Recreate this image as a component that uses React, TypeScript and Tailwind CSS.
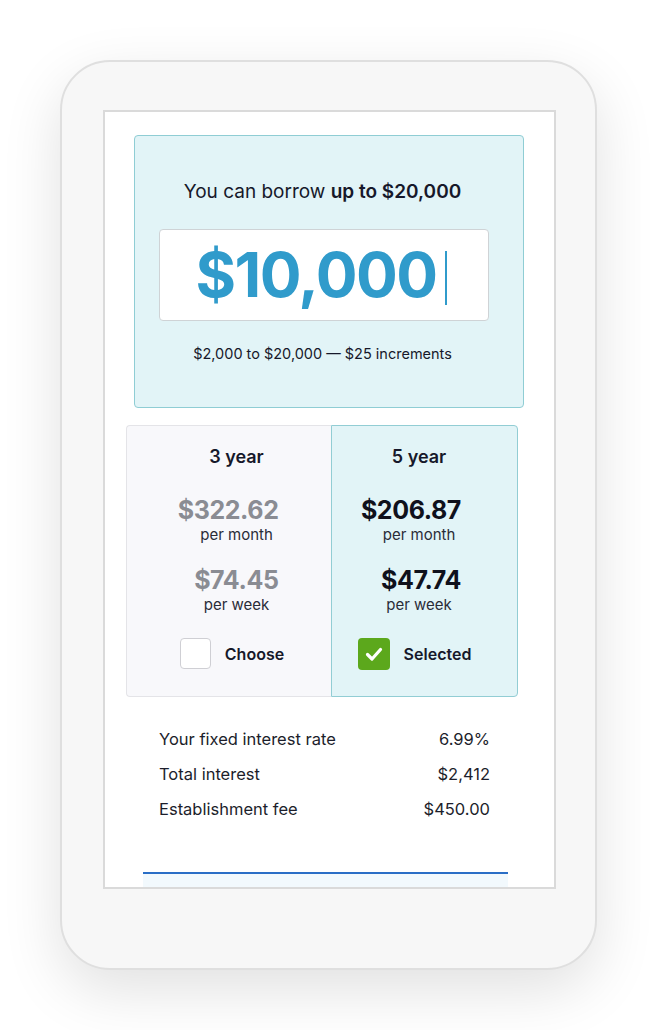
import React from 'react';

const font = { fontFamily: 'Inter, "Open Sans", sans-serif' };

const Option = ({
  title,
  month,
  week,
  selected,
}: {
  title: string;
  month: string;
  week: string;
  selected: boolean;
}) => (
  <div
    className={
      selected
        ? 'w-[187px] flex flex-col items-center bg-[#e2f4f7] border border-[#92cdd4] rounded-r-[4px] pr-[11px] pt-[18px]'
        : 'w-[205px] flex flex-col items-center bg-[#f8f8fb] border border-r-0 border-[#e4e4e8] rounded-l-[4px] pl-[15px] pt-[18px]'
    }
  >
    <div className="text-[18px] font-semibold text-[#16182a] leading-[26px]">{title}</div>
    <div className="w-[120px] mt-[24px] flex flex-col">
      <div
        className={
          'text-right pr-[18px] text-[25px] font-bold leading-[32px] tracking-[-0.4px] ' +
          (selected ? 'text-[#0f111c]' : 'text-[#8a8c93]')
        }
      >
        {month}
      </div>
      <div className="text-center text-[15px] leading-[18px] text-[#2a2c38]">per month</div>
      <div
        className={
          'text-right pr-[18px] text-[25px] font-bold leading-[32px] tracking-[-0.4px] mt-[20px] ' +
          (selected ? 'text-[#0f111c]' : 'text-[#8a8c93]')
        }
      >
        {week}
      </div>
      <div className="text-center text-[15px] leading-[18px] text-[#2a2c38]">per week</div>
    </div>
    <div className="flex items-center gap-[14px] mt-[24px] mr-[9px]">
      {selected ? (
        <div className="w-[32px] h-[32px] rounded-[4px] bg-[#5ca81c] flex items-center justify-center">
          <svg width="20" height="20" viewBox="0 0 20 20">
            <path d="M3.5 10.5 L8 15 L16.5 5.5" fill="none" stroke="white" strokeWidth="3.2" strokeLinecap="round" strokeLinejoin="round" />
          </svg>
        </div>
      ) : (
        <div className="w-[31px] h-[31px] rounded-[4px] bg-white border border-[#cfcfd4]" />
      )}
      <div className="text-[16px] font-semibold text-[#16182a]">{selected ? 'Selected' : 'Choose'}</div>
    </div>
  </div>
);

export default function App() {
  return (
    <div className="min-h-[1030px] bg-white pt-[60px] pl-[60px]" style={font}>
      <div className="w-[537px] h-[910px] rounded-[50px] bg-[#f7f7f7] border-2 border-[#dfdfdf] shadow-[0_20px_60px_rgba(0,0,0,0.12)] pt-[48px] pl-[41px]">
        <div className="w-[453px] h-[779px] bg-white border-2 border-[#dadada] overflow-hidden">
          <div className="ml-[29px] mt-[23px] w-[390px] h-[273px] bg-[#e2f4f7] border border-[#8fcdd4] rounded-[4px] flex flex-col items-center pt-[43px]">
            <div className="text-[19px] text-[#16182a] leading-[26px] ml-[-13px]">
              You can borrow <span className="font-semibold">up to $20,000</span>
            </div>
            <div className="self-start ml-[24px] mt-[24px] w-[330px] h-[92px] bg-white border border-[#cfd3d6] rounded-[4px] flex items-center justify-center">
              <span className="text-[62px] font-bold text-[#309bcb] leading-none tracking-[-1.5px] ml-[-6px]">$10,000</span>
              <span className="w-[2px] h-[54px] bg-[#309bcb] ml-[8px] mt-[6px]" />
            </div>
            <div className="mt-[22px] text-[14.5px] text-[#16182a] ml-[-13px]">$2,000 to $20,000 — $25 increments</div>
          </div>

          <div className="ml-[21px] mt-[17px] w-[392px] h-[272px] flex">
            <Option title="3 year" month="$322.62" week="$74.45" selected={false} />
            <Option title="5 year" month="$206.87" week="$47.74" selected={true} />
          </div>

          <div className="ml-[54px] mr-[64px] mt-[31px] flex flex-col gap-[13px] text-[16.5px] text-[#1c1e2b] leading-[22px]">
            <div className="flex justify-between">
              <span>Your fixed interest rate</span>
              <span>6.99%</span>
            </div>
            <div className="flex justify-between">
              <span>Total interest</span>
              <span>$2,412</span>
            </div>
            <div className="flex justify-between">
              <span>Establishment fee</span>
              <span>$450.00</span>
            </div>
          </div>

          <div className="ml-[38px] mt-[52px] w-[365px] h-[40px] bg-[#f2f9fd] border-t-2 border-[#2a6ec6]" />
        </div>
      </div>
    </div>
  );
}
